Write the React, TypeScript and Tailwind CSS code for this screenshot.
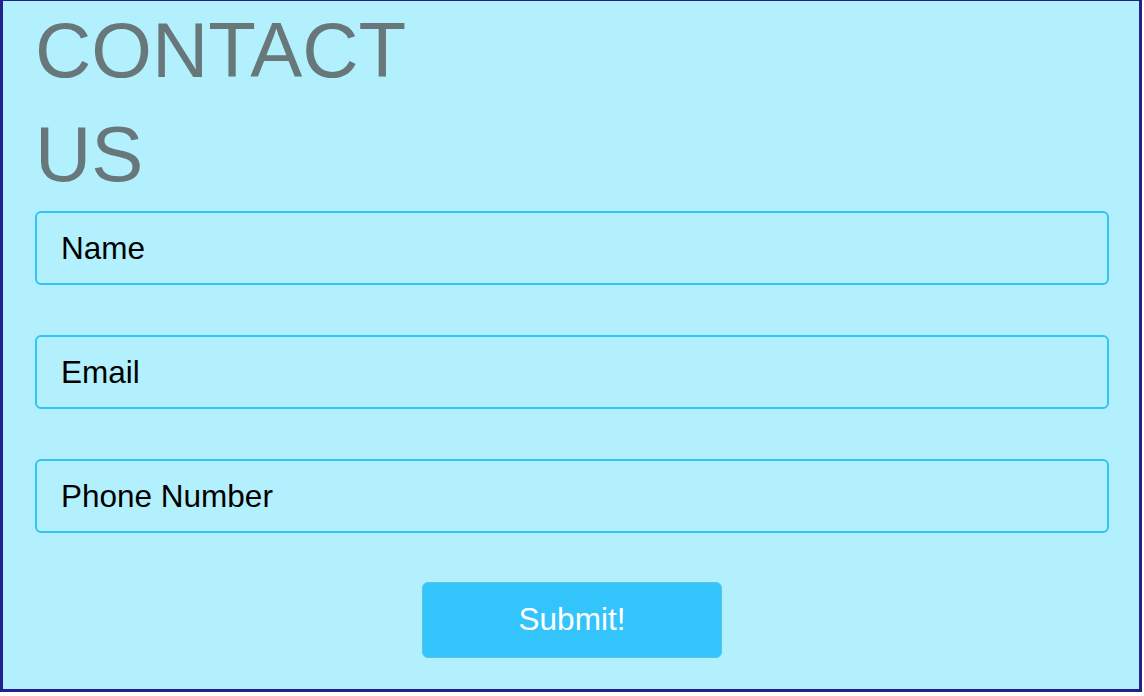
import React from "react";

const fields = ["Name", "Email", "Phone Number"];

export default function App() {
  return (
    <div className="w-[1142px] h-[692px] bg-[#b3f0fd] border-[3px] border-t border-[#22228c] font-['Liberation_Sans',Arial,sans-serif]">
      <div className="pl-[32px] pr-[30px]">
        {/* Heading */}
        <h1 className="w-[400px] text-[78px] leading-[104px] text-[#687779] -mt-[3px]">
          CONTACT US
        </h1>

        {/* Form */}
        <form className="flex flex-col gap-[50px] mt-[5px]" onSubmit={(e) => e.preventDefault()}>
          {fields.map((f) => (
            <input
              key={f}
              type="text"
              placeholder={f}
              className="h-[74px] w-full rounded-[6px] border-2 border-[#33c3f5] bg-transparent px-[24px] text-[31.5px] text-black placeholder:text-black outline-none"
            />
          ))}
          <div className="flex justify-center -mt-[1px]">
            <button
              type="submit"
              className="h-[76px] w-[300px] rounded-[6px] border border-[#5cc3e6] bg-[#33c4fc] text-[31.5px] text-white"
            >
              Submit!
            </button>
          </div>
        </form>
      </div>
    </div>
  );
}
